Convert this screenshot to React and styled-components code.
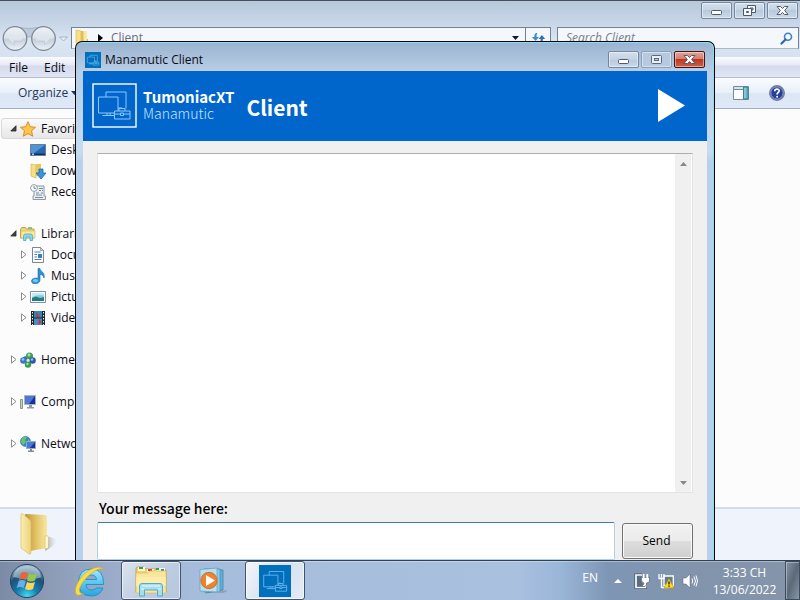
import React from "react";
import styled, { createGlobalStyle, css } from "styled-components";

const UI = `"Open Sans", "Noto Sans", sans-serif`;
const BRAND = `"Noto Sans CJK SC", "Noto Sans CJK JP", sans-serif`;

const GlobalStyle = createGlobalStyle`
  *, *::before, *::after { box-sizing: border-box; }
  body { margin: 0; overflow: hidden; font: 12px/16px ${UI}; color: #0b0b14; }
  button, input, textarea { font: inherit; color: inherit; }
  button { padding: 0; border: 0; background: none; }
  svg { display: block; flex: none; }
`;

const Screen = styled.div`
  height: 100vh;
  display: flex;
  flex-direction: column;
`;

const Desktop = styled.main`
  position: relative;
  flex: 1;
  min-height: 0;
  overflow: hidden;
  display: flex;
`;

/* ---------- Explorer window ---------- */

const Explorer = styled.section`
  flex: 1;
  min-width: 0;
  display: flex;
  flex-direction: column;
  background: #fcfcfc;
`;

const ExplorerTop = styled.header`
  height: 57px;
  flex: none;
  border-top: 1px solid #4b4f5a;
  background: linear-gradient(#b7c8dc, #c8d6e7 40%, #dbe6f3 70%, #d5e1ef);
`;

const Controls = styled.div`
  display: flex;
  justify-content: flex-end;
  gap: 2px;
`;

const ExplorerControls = styled(Controls)`
  height: 25px;
  padding: 1px 2px 0 0;
`;

const ControlButton = styled.button`
  width: 31px;
  height: 17px;
  display: grid;
  place-items: center;
  border: 1px solid #7487a0;
  border-radius: 2px;
  background: linear-gradient(#d3dfed, #c3d2e3 50%, #b8c9dd 50%, #cbd9e9);
  box-shadow: inset 0 0 0 1px rgba(255, 255, 255, 0.45);
  ${(p) => p.$muted && css`border-color: #8b9fb9; background: #b6c9df;`}
  ${(p) => p.$close && css`
    border-color: #40161b;
    background: linear-gradient(#e5a294, #d67b6a 48%, #bd3823 50%, #d0604a);
  `}
`;

const AddressRow = styled.div`
  display: flex;
  align-items: flex-start;
  padding: 0 0 0 2px;
`;

const NavButtons = styled.div`
  display: flex;
  align-items: center;
  width: 69px;
`;

const AddressBar = styled.div`
  flex: 1;
  height: 22px;
  margin-top: 1px;
  padding-left: 3px;
  display: flex;
  align-items: center;
  border: 1px solid #76818f;
  border-bottom-color: #a9b6c6;
  background: #f4f8fc;
  color: #6b7078;
`;

const Crumb = styled.span`
  flex: 1;
  padding-left: 8px;
`;

const RefreshButton = styled.button`
  width: 25px;
  height: 20px;
  display: grid;
  place-items: center;
  margin-left: 6px;
  border-left: 1px solid #76818f;
`;

const SearchBox = styled.label`
  width: 242px;
  height: 22px;
  margin: 1px 1px 0 6px;
  padding: 0 5px 0 8px;
  display: flex;
  align-items: center;
  border: 1px solid #76818f;
  border-bottom-color: #a9b6c6;
  background: #f4f8fc;
`;

const SearchInput = styled.input`
  flex: 1;
  min-width: 0;
  padding: 0;
  border: 0;
  outline: 0;
  background: none;
  &::placeholder { color: #7b8087; opacity: 1; font-style: italic; }
`;

const MenuBar = styled.nav`
  height: 21px;
  flex: none;
  display: flex;
  align-items: center;
  gap: 16px;
  padding: 2px 0 0 9px;
  border-bottom: 1px solid #b6bccc;
  background: linear-gradient(#fafbfe, #e6e9f6 40%, #d5daec 45%, #e1e6f6);
`;

const CommandBar = styled.div`
  height: 31px;
  flex: none;
  display: flex;
  align-items: center;
  padding: 0 15px 0 18px;
  border-bottom: 1px solid #a0afc3;
  background: linear-gradient(#fafcfe, #e8eff9 50%, #dbe6f4 52%, #dfe9f7);
  color: #1e395b;
`;

const Organize = styled.button`
  display: flex;
  align-items: center;
  gap: 3px;
  margin-right: auto;
`;

const IconButton = styled.button`
  margin-left: 20px;
`;

const Sidebar = styled.nav`
  flex: 1;
  min-height: 0;
  width: 180px;
  padding-top: 9px;
`;

const Group = styled.ul`
  list-style: none;
  margin: 0 0 21px;
  padding: 0;
`;

const Item = styled.li`
  height: 21px;
  display: flex;
  align-items: center;
  padding-left: ${(p) => (p.$child ? 19 : 9)}px;
  border: 1px solid transparent;
  border-radius: 3px;
  white-space: nowrap;
  ${(p) => p.$selected && css`
    margin-left: 1px;
    padding-left: 8px;
    border-color: #d9d9d9;
    background: linear-gradient(#fafafa, #e7e7e7);
  `}
`;

const Twisty = styled.span`
  width: 10px;
  flex: none;
`;

const ItemLabel = styled.span`
  padding-left: 5px;
`;

const Details = styled.footer`
  height: 53px;
  flex: none;
  padding: 2px 0 0 17px;
  border-top: 2px solid #d5dbe7;
  background: #eff3fb;
`;

/* ---------- Client window ---------- */

const ClientWindow = styled.section`
  position: absolute;
  top: 41px;
  left: 75px;
  right: 85px;
  bottom: 0;
  display: flex;
  flex-direction: column;
  padding: 0 7px;
  border: 1px solid #07090c;
  border-bottom: 0;
  border-radius: 7px 7px 0 0;
  background: linear-gradient(#9ab3d0 0, #b9cfe7 30px, #c7dcf0 110px, #b9d0ea 120px);
  box-shadow: inset -1px 1px 0 #8fdcf2;
`;

const ClientTitle = styled.header`
  height: 29px;
  flex: none;
  display: flex;
  align-items: center;
  padding: 6px 2px 0;
`;

const TitleText = styled.h1`
  flex: 1;
  margin: 0 0 0 4px;
  font: 12px/16px ${UI};
`;

const Banner = styled.div`
  height: 70px;
  flex: none;
  display: flex;
  align-items: center;
  padding: 0 22px 2px 9px;
  background: #0066cc;
  color: #fff;
  font-family: ${BRAND};
`;

const Brand = styled.div`
  margin: 0 12px 0 6px;
`;

const BrandName = styled.div`
  font-size: 15px;
  line-height: 16px;
  font-weight: 700;
`;

const BrandSub = styled.div`
  font-size: 14px;
  line-height: 16px;
  font-weight: 300;
  color: #c5e3ff;
`;

const BannerTitle = styled.h2`
  flex: 1;
  margin: 4px 0 0;
  font-size: 21px;
  line-height: 30px;
  font-weight: 700;
`;

const ClientBody = styled.div`
  flex: 1;
  min-height: 0;
  display: flex;
  flex-direction: column;
  padding: 12px 14px 0;
  background: #f0f0f0;
`;

const LogPane = styled.div`
  flex: 1;
  min-height: 0;
  display: flex;
  border: 1px solid #e2e3ea;
  border-top-color: #abadb3;
  background: #fff;
`;

const Log = styled.textarea`
  flex: 1;
  padding: 4px;
  border: 0;
  outline: 0;
  resize: none;
  background: #fff;
`;

const ScrollTrack = styled.div`
  width: 17px;
  display: flex;
  flex-direction: column;
  justify-content: space-between;
  align-items: center;
  padding: 8px 0 7px;
  border-right: 1px solid #fff;
  background: #f0f0f0;
`;

const MessageLabel = styled.label`
  padding: 5px 0 4px 2px;
  font: 500 14px/20px ${BRAND};
  color: #000;
`;

const Composer = styled.form`
  display: flex;
  align-items: center;
  gap: 7px;
`;

const MessageInput = styled.input`
  flex: 1;
  min-width: 0;
  height: 38px;
  padding: 0 6px;
  border: 1px solid #b5cfe7;
  border-top-color: #3d7bad;
  border-radius: 2px;
  outline: 0;
  background: #fff;
`;

const SendButton = styled.button`
  width: 71px;
  height: 36px;
  padding-right: 2px;
  border: 1px solid #707070;
  border-radius: 3px;
  background: linear-gradient(#f2f2f2, #ebebeb 50%, #dddddd 50%, #cfcfcf);
  box-shadow: inset 0 0 0 1px #fafafa;
  color: #000;
`;

/* ---------- Taskbar ---------- */

const Taskbar = styled.footer`
  height: 40px;
  flex: none;
  display: flex;
  align-items: stretch;
  border-top: 1px solid #2f4056;
  background: linear-gradient(90deg, #7b8ba6 0, #8c9cb7 50px, #98a9c6 100px, #a6bcdb 190px, #a9c0df 65%, #9ab6d8 70%, #7e96b5 76%, #8194ac 86%, #8595aa);
  box-shadow: inset 0 1px 0 rgba(255, 255, 255, 0.35);
`;

const TaskButton = styled.button`
  width: ${(p) => p.$width}px;
  flex: none;
  display: grid;
  place-items: center;
  ${(p) => p.$open && css`
    border: 1px solid #42546f;
    border-radius: 3px;
    background: linear-gradient(135deg, #dae3ef, #bccbe0 60%, #b5c7df);
    box-shadow: inset 0 0 0 1px rgba(255, 255, 255, 0.6);
  `}
  ${(p) => p.$active && css`
    background: linear-gradient(120deg, #f3f7fb, #d5e1ef 50%, #e3ebf5);
  `}
`;

const Spacer = styled.div`
  width: 5px;
  flex: none;
`;

const Tray = styled.div`
  margin-left: auto;
  display: flex;
  align-items: center;
  color: #fff;
`;

const Language = styled.span`
  padding: 0 16px 6px 0;
`;

const TrayIcons = styled.div`
  display: flex;
  align-items: center;
  gap: 8px;
`;

const Clock = styled.time`
  width: 87px;
  padding-left: 6px;
  text-align: center;
  line-height: 17px;
`;

const ShowDesktop = styled.button`
  align-self: stretch;
  width: 15px;
  border: 1px solid #3e4c5f;
  background: linear-gradient(110deg, #8694a6, #5c6979 50%, #8896a9);
  box-shadow: inset 1px 1px 0 rgba(255, 255, 255, 0.35);
`;

/* ---------- Drawings ---------- */

const MinGlyph = () => (
  <svg width="13" height="9" viewBox="0 0 13 9"><rect x="1.5" y="4.5" width="10" height="4" rx="1" fill="#fff" stroke="#505967" /></svg>
);
const MaxGlyph = () => (
  <svg width="11" height="9" viewBox="0 0 11 9"><rect x=".5" y=".5" width="10" height="8" rx="1" fill="#e6eef7" stroke="#5c687b" /><rect x="3.5" y="3.500" width="4" height="2" fill="#b6c9df" stroke="#5c687b" /></svg>
);
const RestoreGlyph = () => (
  <svg width="13" height="11" viewBox="0 0 13 11"><path d="M4.500.5h8v7h-8z" fill="#f4f7fb" stroke="#505967" /><path d="M7 3h3v2H7z" fill="#c3d2e3" stroke="#505967" /><path d="M.5 3.500h8v7h-8z" fill="#f4f7fb" stroke="#505967" /><path d="M3.500 6.500h2v1h-2z" fill="#c3d2e3" stroke="#505967" /></svg>
);
const CloseGlyph = () => (
  <svg width="13" height="11" viewBox="0 0 13 11"><path d="M1 1.500h3.500l2 2 2-2H12L8.700 5.500 12 9.500H8.500l-2-2-2 2H1l3.300-4z" fill="#fff" stroke="#555b68" /></svg>
);

const NavGlyph = () => (
  <svg width="69" height="26" viewBox="0 0 69 26">
    <defs><linearGradient id="nav" x2="0" y2="1"><stop offset="0" stopColor="#eef2f6" /><stop offset=".45" stopColor="#dde4eb" /><stop offset=".55" stopColor="#c6d0da" /><stop offset="1" stopColor="#edf3f9" /></linearGradient></defs>
    <path d="M12 1Q27 4 42 1L40 8Q27 14 14 8z" fill="#bccadb" stroke="#9dabbe" strokeWidth=".8" />
    <circle cx="13" cy="12.500" r="11.800" fill="url(#nav)" stroke="#7f8894" strokeWidth="1.300" />
    <circle cx="41.500" cy="12.500" r="11.800" fill="url(#nav)" stroke="#7f8894" strokeWidth="1.300" />
    <path d="M6 13l6-6v4h8v4h-8v4zM48.500 13l-6-6v4h-8v4h8v4z" fill="#dfe6ee" opacity=".85" />
    <path d="M6 13l6 6v-4h8M48.500 13l-6 6v-4h-8" fill="none" stroke="#bcc6d0" strokeWidth=".7" />
    <path d="M57.500 11h8l-4 4z" fill="#e8eff7" stroke="#a4b3c5" />
  </svg>
);
const FolderSmall = () => (
  <svg width="14" height="18" viewBox="0 0 14 18"><path d="M1 1l5 1v14l-5-2z" fill="#f6e08a" stroke="#d6b64c" strokeWidth=".6" /><path d="M6 2h6v12H6z" fill="#dfc055" /><path d="M8.500 2H12v10H8.500z" fill="#f7e9a5" /><path d="M12 10v5h1v-5z" fill="#a8b7c3" /></svg>
);
const Caret = ({ color = "#10183a" }) => (
  <svg width="7" height="4" viewBox="0 0 7 4"><path d="M0 0h7L3.500 4z" fill={color} /></svg>
);
const CrumbArrow = () => (
  <svg width="14" height="8" viewBox="0 0 14 8"><path d="M9 0l5 4-5 4z" fill="#000" /></svg>
);
const RefreshGlyph = () => (
  <svg width="15" height="12" viewBox="0 0 15 12"><path d="M6.500 1C3.500 1 3.300 3 3.400 5H.8l3.900 4 3.200-4H5.600C5.500 3.500 5.700 2 6.500 1z" fill="#438acb" /><path d="M8 11c3 0 4-2 3.900-4h2.300l-3.300-4-3.300 4h2.100C9.800 9 9.300 10 8 11z" fill="#316fae" /></svg>
);
const SearchGlyph = () => (
  <svg width="13" height="13" viewBox="0 0 13 13"><circle cx="8" cy="4.800" r="3.500" fill="#f4faff" stroke="#3f80c4" strokeWidth="1.600" /><path d="M5.500 7.500L1.500 11.500" stroke="#2b69a9" strokeWidth="2.200" strokeLinecap="round" /></svg>
);
const PaneGlyph = () => (
  <svg width="16" height="14" viewBox="0 0 16 14"><path d="M.5.5h15v13H.5z" fill="#fff" stroke="#77899e" /><path d="M1 1h14v2H1z" fill="#d7e3ec" /><path d="M1 3.500h9" stroke="#77899e" /><path d="M10.500 1h4.500v12h-4.500z" fill="#65b5c9" stroke="#417f97" /><path d="M12 2v10" stroke="#a6dce5" /></svg>
);
const HelpGlyph = () => (
  <svg width="16" height="16" viewBox="0 0 16 16"><circle cx="8" cy="8" r="7.300" fill="#273f9d" stroke="#747c90" strokeWidth="1.300" /><circle cx="8" cy="8" r="6.200" fill="none" stroke="#aabbe7" strokeWidth=".8" /><path d="M5.700 6.200C5.800 3.400 10.500 3.500 10.200 6 10 7.500 8.100 7.600 8.100 9.500" fill="none" stroke="#fff" strokeWidth="1.700" /><circle cx="8.100" cy="11.700" r="1" fill="#fff" /></svg>
);

const OpenTri = () => <svg width="7" height="7" viewBox="0 0 7 7"><path d="M6 .7V6H.8z" fill="#444" stroke="#222" strokeWidth=".8" /></svg>;
const ClosedTri = () => <svg width="7" height="9" viewBox="0 0 7 9"><path d="M1.500 .8l4.500 3.700-4.500 3.700z" fill="#fff" stroke="#8c8c8c" /></svg>;

const icons = {
  star: <path d="M8 .7l2.200 5 5.300.6-4 3.500 1.200 5.400L8 12.500l-4.700 2.700 1.200-5.400-4-3.500 5.300-.6z" fill="#ffc54d" stroke="#d88c29" />,
  desktop: <><path d="M.5 2.500h15v11H.5z" fill="#2467b4" stroke="#657e99" /><path d="M1 3h14L4 11H1z" fill="#5394d5" /><path d="M1 11.500h14V13H1z" fill="#18324f" /><path d="M2 11.500h2V13H2z" fill="#8be2ed" /></>,
  downloads: <><path d="M1 1l5 1v13l-5-2z" fill="#f8df83" stroke="#cfad49" strokeWidth=".6" /><path d="M6 1h5v12H6z" fill="#e8c65c" /><path d="M9 6h4v4h3l-5 6-5-6h3z" fill="#3994dc" stroke="#1867ac" strokeWidth=".8" /></>,
  recent: <><path d="M4 2h10v10h1.500v3.500H3V12h1z" fill="#e9edf0" stroke="#8c9aa5" /><path d="M9 4.500h4M9 6.500h2m1 0h1M6 9h3m2 0h2M6 11h6M5 13.500h8" stroke="#788da0" /><circle cx="4" cy="4" r="3.400" fill="#fff" stroke="#8e9caa" /><path d="M4 2v2.300h2" fill="none" stroke="#4f687f" strokeWidth=".8" /></>,
  libraries: <><path d="M.5 3.500l1-2h4l1 1.500h7.500v9H.5z" fill="#f0d477" stroke="#c4a547" /><path d="M1 5h14v7H1z" fill="#fae999" stroke="#d3b75c" strokeWidth=".6" /><path d="M8 2h4" stroke="#68b572" strokeWidth="1.500" /><path d="M3.500 14.500V10q0-2 2-2h5q2 0 2 2v4.500H10V11H6v3.500z" fill="#8bd7f0" stroke="#4eaac9" strokeWidth=".8" /></>,
  documents: <><path d="M2.500.5h8l3 3v12h-11z" fill="#fafcff" stroke="#7a8796" /><path d="M10.500.5v3h3z" fill="#d9e2eb" stroke="#7a8796" strokeWidth=".7" /><path d="M4.500 5h6M4.500 7.500H7M4.500 10H7M4.500 12.500h7" stroke="#5c83aa" /><path d="M8 7h4v4H8z" fill="#397eb4" /></>,
  music: <><path d="M8 .5h2c0 3 5.500 3.500 4 9.500-.5-2.500-2-3.500-4-3.500V12c0 4.500-8.500 5-8.500 1.200C1.500 10.500 5.500 9.300 8 10.500z" fill="#2c92d5" stroke="#176bae" strokeWidth=".6" /><ellipse cx="5.500" cy="12.600" rx="2.600" ry="1.700" fill="#77c9f2" /></>,
  pictures: <><path d="M.5 2.500h15v11H.5z" fill="#fff" stroke="#81909d" /><path d="M2 4h12v8H2z" fill="#83cbec" /><path d="M2 4h12v2.500Q8 5 2 8z" fill="#c9e9f6" /><path d="M2 9l4-1.500 4 1.500 4-1v3H2z" fill="#25875c" /><path d="M2 10.500h12V12H2z" fill="#276daa" /></>,
  videos: <><path d="M1 1h14v14H1z" fill="#1c2830" /><path d="M4 1h8v6.500H4z" fill="#407fae" /><path d="M4 8.500h8V15H4z" fill="#518bbd" /><path d="M6 2l4 5H6zM9 9l3 3-4 3z" fill="#a34750" /><path d="M2.500 2v13M13.500 2v13" stroke="#e6edf0" strokeDasharray="1.500 1.500" /></>,
  home: <><circle cx="5.500" cy="7" r="2.800" fill="#336eae" /><circle cx="9.500" cy="4" r="3.500" fill="#3fa056" /><circle cx="3.500" cy="8.500" r="3.300" fill="#3a75c4" /><circle cx="12.500" cy="8.500" r="3.300" fill="#2d56ac" /><circle cx="8" cy="12.500" r="3.200" fill="#3a9a4e" /><circle cx="9" cy="3" r="1.400" fill="#a5e39f" /><circle cx="3" cy="7.500" r="1.300" fill="#94c8ec" /><circle cx="12" cy="7.500" r="1.300" fill="#9dbdf0" /><circle cx="7.500" cy="12" r="1.200" fill="#a5e39f" /><circle cx="8" cy="8.300" r="1.500" fill="#d7e9ef" /></>,
  computer: <><path d="M4.500 1.500h11v9h-11z" fill="#182f9c" stroke="#aab3bc" /><path d="M5 2h10l-6 8H5z" fill="#4f78d4" /><path d="M9 11h3v2h2v1.500H7V13h2z" fill="#909ba6" /><path d="M.5 5.500h2v9h-2z" fill="#cbd3c5" stroke="#758575" strokeWidth=".8" /></>,
  network: <><circle cx="5.500" cy="5.500" r="5" fill="#318bc6" stroke="#2b6aa5" strokeWidth=".6" /><path d="M2 2q3-2 5-1L5 4l1 2-3 3-2-3zM8 3l2 2-2 1z" fill="#68c66a" /><path d="M6.500 5.500h9v7h-9z" fill="#1733a8" stroke="#9da9b6" /><path d="M7 6h8l-5 6H7z" fill="#4a78db" /><path d="M10 13h2v1.500h2V16H8v-1.500h2z" fill="#7f8c99" /></>,
};
const ItemIcon = ({ name }) => <svg width="16" height="16" viewBox="0 0 16 16">{icons[name]}</svg>;

const FolderLarge = () => (
  <svg width="44" height="46" viewBox="0 0 44 46">
    <defs>
      <linearGradient id="fl"><stop offset="0" stopColor="#fbeeb0" /><stop offset="1" stopColor="#ecd27a" /></linearGradient>
      <linearGradient id="fb"><stop offset="0" stopColor="#b8933a" /><stop offset=".5" stopColor="#e3c263" /><stop offset="1" stopColor="#f7e8a6" /></linearGradient>
      <linearGradient id="shade"><stop offset="0" stopColor="#7e8898" stopOpacity=".8" /><stop offset="1" stopColor="#c4ccd8" stopOpacity="0" /></linearGradient>
    </defs>
    <path d="M28 40L32 26Q44 28 38 33T28 40z" fill="url(#shade)" />
    <path d="M8 3L28 4q2 0 2 2v31l-17 3z" fill="url(#fb)" />
    <path d="M28 25q3-1 3.500 1v11l-3.500 1z" fill="#fff6cd" stroke="#d4b95b" strokeWidth=".6" />
    <path d="M4 3q0-1 2 0l7 6q1 1 1 3V41q0 3-2 2L4 37z" fill="url(#fl)" stroke="#d5b95d" strokeWidth=".6" />
  </svg>
);

const DeviceArt = ({ stroke, width = 1 }) => (
  <g fill="none" stroke={stroke} strokeWidth={width}>
    <path d="M14 14V9h20v16.500M26 25h4M6.500 14H26v13.500M6.500 14v16H22M15 30v2.500M18 30v2.500M10.500 32.500H22" />
    <path d="M22.500 28h15.500v8H22.500zM27 28v-2.500h6V28M22.500 31h6M31.500 31H38M28.500 30h3v2.500h-3z" />
  </g>
);
const BrandLogo = () => (
  <svg width="45" height="45" viewBox="0 0 45 45"><rect x="1" y="1" width="43" height="43" fill="none" stroke="#fff" strokeWidth="1.400" /><DeviceArt stroke="#8fc6fb" /></svg>
);
const AppIcon = ({ size }) => (
  <svg width={size} height={size} viewBox="0 0 44 44"><path d="M0 0h44v44H0z" fill="#006fbc" /><DeviceArt stroke="#63b4ea" width={size < 20 ? 1.8 : 1.3} /></svg>
);
const PlayGlyph = () => <svg width="27" height="33" viewBox="0 0 27 33"><path d="M0 0v33l27-16.500z" fill="#fff" /></svg>;
const ScrollArrow = ({ up }) => (
  <svg width="7" height="4" viewBox="0 0 7 4"><path d={up ? "M0 4L3.500 0 7 4z" : "M0 0h7L3.500 4z"} fill="#888" /></svg>
);

const StartOrb = () => (
  <svg width="36" height="36" viewBox="0 0 36 36">
    <defs><radialGradient id="orb" cx=".5" cy=".95" r=".9"><stop offset="0" stopColor="#42dbf2" /><stop offset=".35" stopColor="#167fae" /><stop offset=".7" stopColor="#1f4f78" /><stop offset="1" stopColor="#9bb5c8" /></radialGradient></defs>
    <circle cx="18" cy="18" r="16.600" fill="url(#orb)" stroke="#294661" />
    <path d="M4 14Q6 3 18 3t14 11q-7 4-28 0z" fill="#cbdde8" opacity=".5" />
    <path d="M12 10q3-2 7 0l-2 7q-4-2-7 0z" fill="#e76638" />
    <path d="M20 10.500q4 2 8 0l-2 7q-4 2-8 0z" fill="#99c64d" />
    <path d="M9.700 18q3-2 7 0l-2 7q-4-2-7 0z" fill="#68afea" />
    <path d="M18 19q4 2 8 0l-2 7q-4 2-8 0z" fill="#ffd35b" />
  </svg>
);
const ExplorerE = () => (
  <svg width="32" height="32" viewBox="0 0 32 32">
    <defs><linearGradient id="ie" x2="0" y2="1"><stop offset="0" stopColor="#a5e6fb" /><stop offset=".5" stopColor="#5cc8f2" /><stop offset="1" stopColor="#2ba3de" /></linearGradient></defs>
    <path d="M29.500 19.500H12q.3 5.500 5.500 5.500 3.500 0 5-2h6.500Q26 31 17.500 31 4.500 31 4.500 17.500 4.500 4 17.500 4q12.500 0 12 15.500zM12 14.500h10.500Q22 10 17.300 10T12 14.500z" fill="url(#ie)" stroke="#218cc6" strokeWidth=".9" />
    <path d="M30 4.500C26-1 14 4 7.500 12 1 20 0 28 3 30q2 1 6.500-1.500C2.500 29 5.500 21 10.500 15 17 7.500 25.500 1.500 30 4.500z" fill="#fadb4a" stroke="#d7a51d" strokeWidth=".6" />
  </svg>
);
const FolderStack = () => (
  <svg width="34" height="32" viewBox="0 0 34 32">
    <path d="M2 4q0-2 2-2h6l2 2h18q2 0 2 2v21H2z" fill="#efd277" stroke="#b99443" strokeWidth=".8" />
    <path d="M4 2h7v4H4zM13 4h7v4h-7zM22 3h9v4h-9z" fill="#fff6cf" />
    <path d="M5 3h4" stroke="#33a34f" strokeWidth="2" /><path d="M14 5h4" stroke="#d94532" strokeWidth="2" /><path d="M22 4h3" stroke="#33a34f" strokeWidth="2" /><path d="M27 5h3" stroke="#3286c9" strokeWidth="2" />
    <path d="M2 8h12l2-2h16v22H2z" fill="#f9e799" stroke="#d8bb60" strokeWidth=".7" />
    <path d="M2 12h30v9H2z" fill="#fff2b5" opacity=".6" />
    <path d="M5.500 31V21q0-2.500 2.500-2.500h18q2.500 0 2.500 2.500v10h-5v-6h-13v6z" fill="#a4def2" stroke="#58a9c8" />
    <path d="M8 21h18M7 24h3M24 24h3" stroke="#e6faff" />
  </svg>
);
const MediaPlayer = () => (
  <svg width="30" height="28" viewBox="0 0 30 28">
    <path d="M20 25l9-2q0 2-5 3z" fill="#7888a0" opacity=".6" />
    <path d="M8 2l17 1v20L8 26z" fill="#64afd5" stroke="#377fac" strokeWidth=".7" /><path d="M6 2h16v23H6z" fill="#91cbe5" stroke="#428db8" strokeWidth=".7" />
    <path d="M2 2.500L19 1v24L2 24z" fill="#b8dff2" stroke="#5aa0c6" strokeWidth=".7" />
    <circle cx="11" cy="13.500" r="8.200" fill="#f1812c" stroke="#c45b17" strokeWidth=".7" /><path d="M8 8v11l9-5.500z" fill="#fff" />
  </svg>
);
const PowerGlyph = () => (
  <svg width="16" height="16" viewBox="0 0 16 16">
    <path d="M8 2H2v12.500h9.500V13" fill="none" stroke="#46566a" strokeWidth="3.200" />
    <path d="M8 2H2v12.500h9.500V13" fill="none" stroke="#fff" strokeWidth="1.700" />
    <path d="M4 4h3v4l2 3v2H4z" fill="#5a6c84" />
    <path d="M7.500 4.500h8V8q-1 2-3 2v2q-1 2-4 1.500v-1.500q1.500 0 1.500-2Q7.500 9.500 7.500 7z" fill="#fff" stroke="#46566a" strokeWidth=".6" />
    <path d="M9.700 1v4M13.300 1v4" stroke="#fff" strokeWidth="1.800" />
  </svg>
);
const NetworkGlyph = () => (
  <svg width="16" height="16" viewBox="0 0 16 16"><path d="M6 3h9.300v9.500H6z" fill="#657a95" stroke="#fff" strokeWidth="1.300" /><path d="M1 1v4.500h5V1M3.500 1v14M3.500 14.500h7" fill="none" stroke="#fff" strokeWidth="1.300" /><path d="M11 5.500l5 9.500H6z" fill="#ffd926" stroke="#b38a09" strokeWidth=".6" /><path d="M11 8.500v3M11 12.500v1.200" stroke="#222" strokeWidth="1.400" /></svg>
);
const VolumeGlyph = () => (
  <svg width="16" height="16" viewBox="0 0 16 16"><path d="M1 5h3l4-4v14l-4-4H1z" fill="#fff" stroke="#53637a" strokeWidth=".5" /><path d="M10 5.500q1.500 2.500 0 5M12 3.500q3 4.500 0 9M14 2.500q3 5.500 0 11" fill="none" stroke="#fff" strokeWidth="1" /></svg>
);
const TrayArrow = () => (
  <svg width="12" height="4" viewBox="0 0 12 4"><path d="M0 4l4-4 4 4z" fill="#fff" /></svg>
);

/* ---------- Data ---------- */

const groups = [
  { label: "Favorites", icon: "star", open: true, selected: true, items: [["Desktop", "desktop"], ["Downloads", "downloads"], ["Recent Places", "recent"]] },
  { label: "Libraries", icon: "libraries", open: true, items: [["Documents", "documents", true], ["Music", "music", true], ["Pictures", "pictures", true], ["Videos", "videos", true]] },
  { label: "Homegroup", icon: "home", items: [] },
  { label: "Computer", icon: "computer", items: [] },
  { label: "Network", icon: "network", items: [] },
];

export default function App() {
  return (
    <Screen>
      <GlobalStyle />
      <Desktop>
        <Explorer>
          <ExplorerTop>
            <ExplorerControls>
              <ControlButton aria-label="Minimize"><MinGlyph /></ControlButton>
              <ControlButton aria-label="Restore"><RestoreGlyph /></ControlButton>
              <ControlButton aria-label="Close"><CloseGlyph /></ControlButton>
            </ExplorerControls>
            <AddressRow>
              <NavButtons><NavGlyph /></NavButtons>
              <AddressBar>
                <FolderSmall />
                <CrumbArrow />
                <Crumb>Client</Crumb>
                <Caret />
                <RefreshButton aria-label="Refresh"><RefreshGlyph /></RefreshButton>
              </AddressBar>
              <SearchBox>
                <SearchInput placeholder="Search Client" aria-label="Search Client" />
                <SearchGlyph />
              </SearchBox>
            </AddressRow>
          </ExplorerTop>
          <MenuBar>
            <button>File</button>
            <button>Edit</button>
          </MenuBar>
          <CommandBar>
            <Organize>Organize <Caret color="#1e395b" /></Organize>
            <IconButton aria-label="Preview pane"><PaneGlyph /></IconButton>
            <IconButton aria-label="Help"><HelpGlyph /></IconButton>
          </CommandBar>
          <Sidebar>
            {groups.map((g) => (
              <Group key={g.label}>
                <Item $selected={g.selected}>
                  <Twisty>{g.open ? <OpenTri /> : <ClosedTri />}</Twisty>
                  <ItemIcon name={g.icon} />
                  <ItemLabel>{g.label}</ItemLabel>
                </Item>
                {g.items.map(([label, icon, expandable]) => (
                  <Item key={label} $child>
                    <Twisty>{expandable && <ClosedTri />}</Twisty>
                    <ItemIcon name={icon} />
                    <ItemLabel>{label}</ItemLabel>
                  </Item>
                ))}
              </Group>
            ))}
          </Sidebar>
          <Details><FolderLarge /></Details>
        </Explorer>

        <ClientWindow>
          <ClientTitle>
            <AppIcon size={16} />
            <TitleText>Manamutic Client</TitleText>
            <Controls>
              <ControlButton aria-label="Minimize"><MinGlyph /></ControlButton>
              <ControlButton $muted aria-label="Maximize"><MaxGlyph /></ControlButton>
              <ControlButton $close aria-label="Close"><CloseGlyph /></ControlButton>
            </Controls>
          </ClientTitle>
          <Banner>
            <BrandLogo />
            <Brand>
              <BrandName>TumoniacXT</BrandName>
              <BrandSub>Manamutic</BrandSub>
            </Brand>
            <BannerTitle>Client</BannerTitle>
            <button aria-label="Start"><PlayGlyph /></button>
          </Banner>
          <ClientBody>
            <LogPane>
              <Log readOnly aria-label="Messages" />
              <ScrollTrack><ScrollArrow up /><ScrollArrow /></ScrollTrack>
            </LogPane>
            <MessageLabel htmlFor="message">Your message here:</MessageLabel>
            <Composer onSubmit={(e) => e.preventDefault()}>
              <MessageInput id="message" />
              <SendButton>Send</SendButton>
            </Composer>
          </ClientBody>
        </ClientWindow>
      </Desktop>

      <Taskbar>
        <TaskButton $width={54} aria-label="Start menu"><StartOrb /></TaskButton>
        <Spacer />
        <TaskButton $width={62} aria-label="Internet Explorer"><ExplorerE /></TaskButton>
        <TaskButton $width={60} $open aria-label="Windows Explorer"><FolderStack /></TaskButton>
        <TaskButton $width={64} aria-label="Media Player"><MediaPlayer /></TaskButton>
        <TaskButton $width={60} $open $active aria-label="Manamutic Client"><AppIcon size={32} /></TaskButton>
        <Tray>
          <Language>EN</Language>
          <TrayIcons>
            <TrayArrow />
            <PowerGlyph />
            <NetworkGlyph />
            <VolumeGlyph />
          </TrayIcons>
          <Clock>3:33 CH<br />13/06/2022</Clock>
          <ShowDesktop aria-label="Show desktop" />
        </Tray>
      </Taskbar>
    </Screen>
  );
}
